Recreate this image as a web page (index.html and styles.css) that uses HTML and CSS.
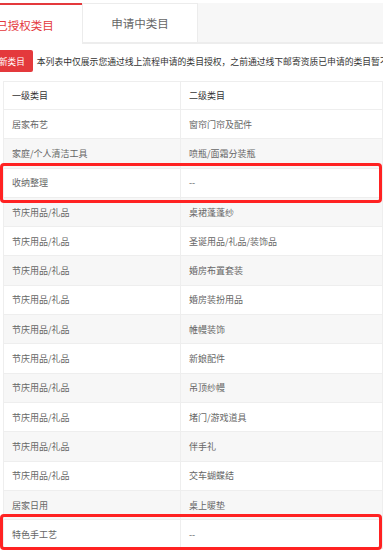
FILE: index.html
```html
<!DOCTYPE html>
<html lang="zh">
<head>
<meta charset="utf-8">
<title>类目</title>
<link rel="stylesheet" href="styles.css">
</head>
<body>
<div class="page">
  <div class="tabs">
    <div class="tab active">已授权类目</div>
    <div class="tab">申请中类目</div>
  </div>
  <div class="notice">
    <span class="badge">新类目</span>
    <span class="desc">本列表中仅展示您通过线上流程申请的类目授权，之前通过线下邮寄资质已申请的类目暂不展示</span>
  </div>
  <table class="grid">
    <colgroup><col class="c1"><col class="c2"></colgroup>
    <thead>
      <tr><th>一级类目</th><th>二级类目</th></tr>
    </thead>
    <tbody>
      <tr><td>居家布艺</td><td>窗帘门帘及配件</td></tr>
      <tr><td>家庭/个人清洁工具</td><td>喷瓶/面霜分装瓶</td></tr>
      <tr><td>收纳整理</td><td>--</td></tr>
      <tr><td>节庆用品/礼品</td><td>桌裙蓬蓬纱</td></tr>
      <tr><td>节庆用品/礼品</td><td>圣诞用品/礼品/装饰品</td></tr>
      <tr><td>节庆用品/礼品</td><td>婚房布置套装</td></tr>
      <tr><td>节庆用品/礼品</td><td>婚房装扮用品</td></tr>
      <tr><td>节庆用品/礼品</td><td>帷幔装饰</td></tr>
      <tr><td>节庆用品/礼品</td><td>新娘配件</td></tr>
      <tr><td>节庆用品/礼品</td><td>吊顶纱幔</td></tr>
      <tr><td>节庆用品/礼品</td><td>堵门/游戏道具</td></tr>
      <tr><td>节庆用品/礼品</td><td>伴手礼</td></tr>
      <tr><td>节庆用品/礼品</td><td>交车蝴蝶结</td></tr>
      <tr><td>居家日用</td><td>桌上暖垫</td></tr>
      <tr><td>特色手工艺</td><td>--</td></tr>
    </tbody>
  </table>
  <div class="mark mark-1"></div>
  <div class="mark mark-2"></div>
</div>
</body>
</html>
```
FILE: styles.css
```css
html, body {
  margin: 0;
  padding: 0;
  background: #fff;
}
body {
  width: 383px;
  height: 550px;
  overflow: hidden;
  font-family: "Noto Sans CJK SC", "Noto Sans", sans-serif;
}
.page {
  position: relative;
  width: 383px;
  height: 550px;
  overflow: hidden;
}
.tabs {
  display: flex;
  margin: 3px 0 0 -32px;
  height: 39px;
  background: #f7f7f7;
  border-bottom: 2px solid #ededed;
}
.tab {
  width: 116px;
  box-sizing: border-box;
  display: flex;
  align-items: center;
  justify-content: center;
  font-size: 11.5px;
  color: #666;
  background: #fff;
  border: 1px solid #ececec;
  border-bottom: none;
}
.tab.active {
  width: 114px;
  color: #e4393c;
  border: none;
  border-top: 2px solid #e4393c;
  height: 41px;
  margin-bottom: -2px;
}
.notice {
  display: flex;
  align-items: center;
  gap: 4px;
  margin-top: 6px;
  height: 22px;
  white-space: nowrap;
}
.badge {
  display: flex;
  align-items: center;
  height: 22px;
  padding: 0 8px 0 0;
  margin-left: -1px;
  background: #e4393c;
  color: #fff;
  font-size: 8.6px;
  border-radius: 0 2px 2px 0;
}
.desc {
  font-size: 8.8px;
  color: #333;
}
.grid {
  margin: 9px 0 0 3px;
  width: 379px;
  border-collapse: collapse;
  table-layout: fixed;
  border: 1px solid #ededed;
  font-size: 9px;
}
.c1 { width: 177px; }
.c2 { width: 202px; }
.grid th, .grid td {
  border: 1px solid #eeeeee;
  text-align: left;
  padding: 0 0 0 8px;
  white-space: nowrap;
}
.grid th {
  height: 27px;
  font-weight: normal;
  color: #333;
}
.grid td {
  height: 28.3px;
  color: #666;
}
.grid tbody tr:nth-child(even) td {
  background: #f7f7f7;
}
.mark {
  position: absolute;
  left: 0;
  width: 382px;
  box-sizing: border-box;
  border: 3.5px solid #ff2222;
  border-radius: 4px;
}
.mark-1 {
  top: 163px;
  height: 40px;
}
.mark-2 {
  top: 514px;
  height: 36px;
}
```
